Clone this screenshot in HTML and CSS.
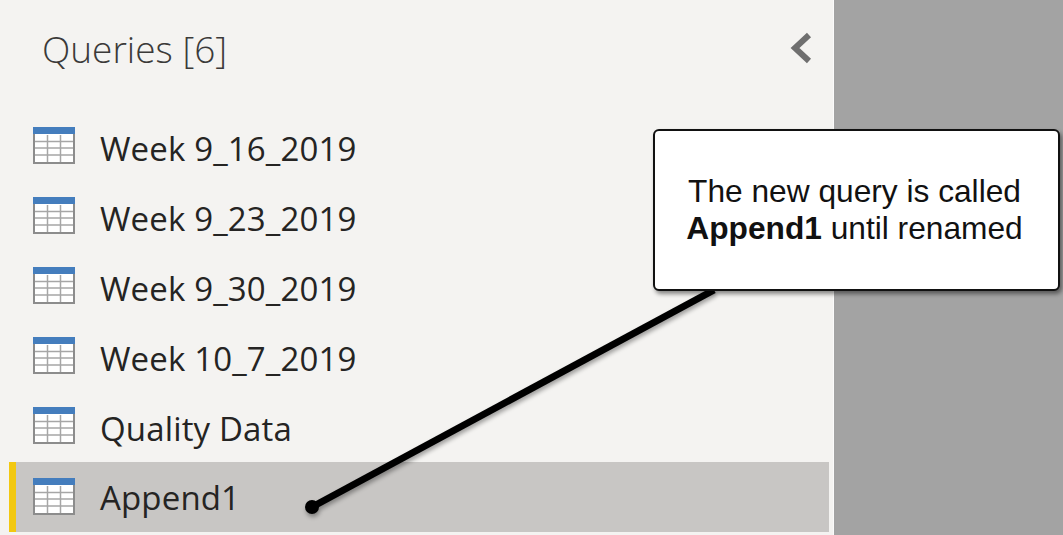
FILE: index.html
```html
<!DOCTYPE html>
<html lang="en">
<head>
    <meta charset="UTF-8">
    <title>Queries</title>
    <link rel="stylesheet" href="styles.css">
</head>
<body>

<svg width="0" height="0" class="defs">
    <symbol id="table" viewBox="0 0 42 37">
        <rect x="1" y="1" width="40" height="35" fill="#fff" stroke="#8c8c8c" stroke-width="2"/>
        <path d="M2 14.500H40M2 21H40M2 28H40M14.500 8V35M27.500 8V35" stroke="#a6a6a6" stroke-width="1.500" fill="none"/>
        <rect x="0" y="0" width="42" height="7" fill="#447dbd"/>
    </symbol>
</svg>

<div class="page">
    <aside class="panel">
        <header class="panel-head">
            <h1>Queries [6]</h1>
            <svg class="collapse" width="24" height="34" viewBox="0 0 24 34">
                <path d="M20 4L6 17L20 30" fill="none" stroke="#6f6f6f" stroke-width="6"/>
            </svg>
        </header>
        <ul class="queries">
            <li><svg class="icon"><use href="#table"/></svg>Week 9_16_2019</li>
            <li><svg class="icon"><use href="#table"/></svg>Week 9_23_2019</li>
            <li><svg class="icon"><use href="#table"/></svg>Week 9_30_2019</li>
            <li><svg class="icon"><use href="#table"/></svg>Week 10_7_2019</li>
            <li><svg class="icon"><use href="#table"/></svg>Quality Data</li>
            <li class="selected"><svg class="icon"><use href="#table"/></svg>Append1</li>
        </ul>
    </aside>
    <div class="backdrop"></div>

    <svg class="leader" width="1063" height="535" viewBox="0 0 1063 535">
        <path d="M714 290L312 507" stroke="#000" stroke-width="7" fill="none"/>
        <circle cx="312" cy="507" r="7" fill="#000"/>
    </svg>
    <div class="callout">
        <p>The new query is called<br><b>Append1</b> until renamed</p>
    </div>
</div>

</body>
</html>
```

FILE: styles.css
```css
body {
    margin: 0;
    font-family: "Open Sans", sans-serif;
    color: #252423;
}
.defs {
    position: absolute;
}
.page {
    position: relative;
    display: flex;
    width: 1063px;
    height: 535px;
    overflow: hidden;
}
.panel {
    width: 833px;
    background-color: #f4f3f1;
    border-right: 1px solid #fbfbfb;
}
.backdrop {
    flex: 1;
    background-color: #a3a3a3;
}
.panel-head {
    display: flex;
    justify-content: space-between;
    align-items: center;
    height: 96px;
    padding: 0 20px 0 42px;
}
.panel-head h1 {
    margin: 0;
    font-size: 37px;
    font-weight: 300;
    color: #3b3a39;
}
.queries {
    list-style: none;
    margin: 0;
    padding: 17px 4px 0 9px;
}
.queries li {
    display: flex;
    align-items: center;
    height: 70px;
    padding-left: 24px;
    font-size: 33px;
    letter-spacing: 0.15px;
    box-sizing: border-box;
}
.queries .selected {
    margin-top: -1px;
    height: 70px;
    padding-left: 17px;
    background-color: #c8c6c4;
    border-left: 7px solid #f2c811;
}
.icon {
    width: 42px;
    height: 37px;
    margin-right: 25px;
    position: relative;
    top: -3px;
}
.selected .icon {
    top: -1px;
}
.leader {
    position: absolute;
    left: 0;
    top: 0;
    filter: drop-shadow(1px 3px 2px rgba(0, 0, 0, 0.35));
}
.callout {
    position: absolute;
    left: 653px;
    top: 129px;
    width: 407px;
    height: 162px;
    box-sizing: border-box;
    display: flex;
    align-items: center;
    justify-content: center;
    padding-right: 4px;
    background-color: #fff;
    border: 2px solid #111;
    border-radius: 6px;
    box-shadow: 2px 3px 4px rgba(0, 0, 0, 0.45);
}
.callout p {
    margin: 0;
    text-align: center;
    font-family: "Liberation Sans", Arial, sans-serif;
    font-size: 31.700px;
    line-height: 37px;
    color: #111;
}
```
